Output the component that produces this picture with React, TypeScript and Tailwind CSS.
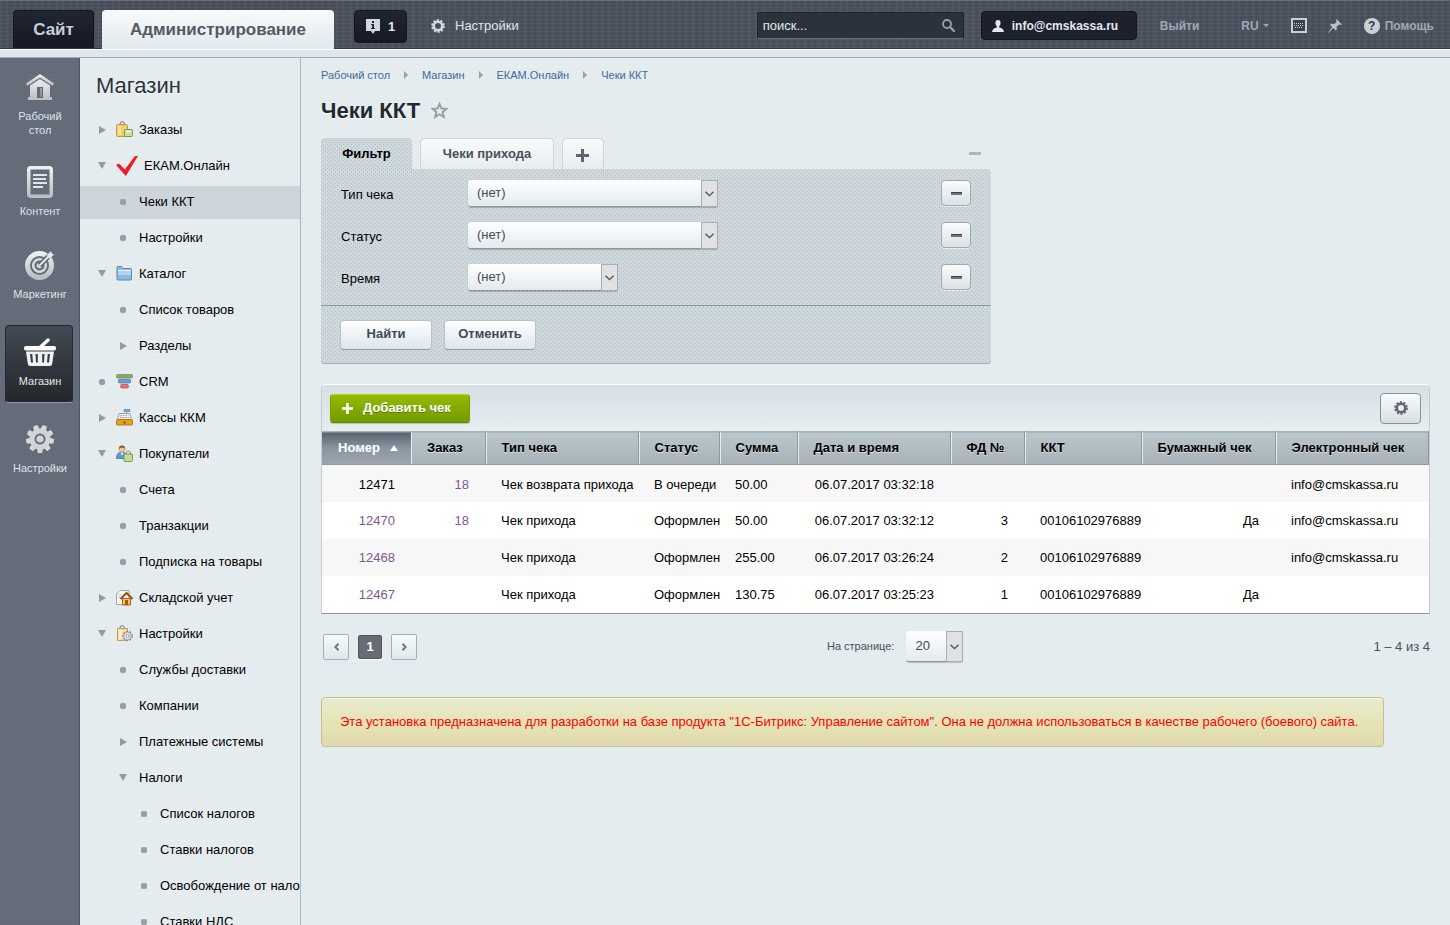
import type { ReactNode } from "react";
import clsx from "clsx";

/* ---------- icons ---------- */

const GearIcon = ({ size = 14, className }: { size?: number; className?: string }) => (
  <svg width={size} height={size} viewBox="0 0 14 14" className={className} fill="none">
    <circle cx="7" cy="7" r="4.2" stroke="currentColor" strokeWidth="2.4" />
    <circle
      cx="7"
      cy="7"
      r="5.9"
      stroke="currentColor"
      strokeWidth="1.8"
      strokeDasharray="2.2 1.5"
    />
  </svg>
);

const PlusIcon = ({ size = 13, className }: { size?: number; className?: string }) => (
  <svg width={size} height={size} viewBox="0 0 13 13" className={className}>
    <path d="M5 0h3v5h5v3H8v5H5V8H0V5h5z" fill="currentColor" />
  </svg>
);

const HomeIcon = () => (
  <svg width="28" height="28" viewBox="0 0 28 28" fill="url(#rail)">
    <path d="M14 1 0 10.5l1.500 2.200L14 4.500l12.500 8.200L28 10.5z" />
    <path d="M14 6 4 12.500V24H2v3h24v-3h-2V12.500zM11 14h6v11h-6z" fillRule="evenodd" />
    <path d="M14 15h2v9h-2z" opacity=".4" />
  </svg>
);

const ContentIcon = () => (
  <svg width="26" height="32" viewBox="0 0 26 32">
    <rect x="1.750" y="1.750" width="22.500" height="28.500" rx="2" fill="none" stroke="url(#rail)" strokeWidth="3.500" />
    <path d="M6 9h14M6 13h13M6 17h14M6 21h10" stroke="#dfe5e8" strokeWidth="2" />
  </svg>
);

const TargetIcon = () => (
  <svg width="30" height="30" viewBox="0 0 30 30" fill="none">
    <circle cx="14.500" cy="15.500" r="12" stroke="url(#rail)" strokeWidth="5" />
    <circle cx="14.500" cy="15.500" r="6.300" stroke="#d5dadd" strokeWidth="2.600" />
    <circle cx="14.500" cy="15.500" r="2.800" fill="#d5dadd" />
    <path d="M14.500 15.500 26 4" stroke="#5d6471" strokeWidth="5" />
    <path d="M14.500 15.500 25 5" stroke="#e3e7e9" strokeWidth="2.200" />
    <path d="m22 5 4-4 .8 2.600L29 4.500 25 8.500l-2.600-.8z" fill="#e3e7e9" />
  </svg>
);

const BasketIcon = () => (
  <svg width="32" height="28" viewBox="0 0 32 28">
    <path d="M16.500 9 24 2" stroke="#fff" strokeWidth="3.400" strokeLinecap="round" />
    <rect y="8" width="32" height="4.500" rx="2" fill="#fff" />
    <path
      d="M2 13.500h28l-1.800 12.300q-.3 2.200-2.400 2.200H6.200q-2.100 0-2.400-2.200zM6 16l1 8.500h2L8.300 16zm5.500 0 .5 8.500h1.800V16zm6.700 0v8.500H20l.5-8.500zm5.500 0-.7 8.500h2L26 16z"
      fill="#eef1f2"
      fillRule="evenodd"
    />
  </svg>
);

const CogIcon = () => (
  <svg width="30" height="30" viewBox="-15 -15 30 30">
    {[20, 60, 100, 140, 180, 220, 260, 300, 340].map((a) => (
      <path key={a} d="M-3-9-2.200-14h4.400L3-9z" fill="#d5dadd" transform={`rotate(${a})`} />
    ))}
    <circle r="8" fill="none" stroke="#cfd5d8" strokeWidth="5" />
    <circle r="3.600" fill="#cfd5d8" />
  </svg>
);

const StarIcon = () => (
  <svg width="17" height="17" viewBox="0 0 17 17">
    <path
      d="m8.500 1.800 1.900 4.600 5 .4-3.800 3.300 1.200 4.900-4.300-2.700L4.200 15l1.200-4.900L1.600 6.800l5-.4z"
      fill="none"
      stroke="#939da4"
      strokeWidth="1.900"
    />
  </svg>
);

const OrdersIcon = () => (
  <svg width="17" height="17" viewBox="0 0 17 17">
    <path d="M4 5V3q0-2.400 2.200-2.400T8.500 3v2" fill="none" stroke="#7d7d78" />
    <rect x=".5" y="3.500" width="11" height="12" rx="1" fill="#f3cd6c" stroke="#c49a45" />
    <path d="M2 5h3v9H2z" fill="#fae3a0" />
    <rect x="8.500" y="8.500" width="8" height="7" rx="1" fill="#cfe09a" stroke="#7c9a55" />
    <path d="M10.500 10.500h4" stroke="#fff" strokeWidth="1.500" />
  </svg>
);

const CheckIcon = () => (
  <svg width="22" height="20" viewBox="0 0 22 20">
    <path d="m0 9 3-1.600 5.800 6L19 0h3L9.800 20z" fill="#ed1c24" />
  </svg>
);

const FolderIcon = () => (
  <svg width="17" height="17" viewBox="0 0 17 17">
    <path d="M1 14V2.500q0-1 1-1h3.500l1.500 2h7.500q1 0 1 1V14q0 1-1 1H2q-1 0-1-1z" fill="#8fbbdd" stroke="#5d87b5" />
    <path d="M2 6h13v4H2z" fill="#b4d4ec" />
    <path d="M2 5.500h13" stroke="#e6f2fa" />
  </svg>
);

const CrmIcon = () => (
  <svg width="17" height="17" viewBox="0 0 17 17">
    <rect x=".5" y="1.500" width="16" height="3.500" rx="1" fill="#8aa867" stroke="#6f8d50" strokeWidth=".7" />
    <rect x="2.500" y="6.300" width="12" height="3.700" rx="1" fill="#6f9ed2" stroke="#4a73a8" strokeWidth=".7" />
    <rect x="4.700" y="11.500" width="7.600" height="3.500" rx="1" fill="#e2736b" stroke="#b74a45" strokeWidth=".7" />
  </svg>
);

const CashIcon = () => (
  <svg width="17" height="17" viewBox="0 0 17 17">
    <path d="M8 .5h6v2H8z" fill="#64a9e0" stroke="#3f81bd" strokeWidth=".6" />
    <path d="M10 2.500h1V5h-1z" fill="#999" />
    <path d="M3 4.500h11l1.500 6.500h-14z" fill="#eceff0" stroke="#9ba1a3" />
    <path d="M4.500 6.500h8M4 8.500h9" stroke="#9ba1a3" strokeDasharray="1.500 1" />
    <rect x=".5" y="10.500" width="16" height="5.500" rx="1" fill="#e3a21d" stroke="#b57c12" />
    <path d="M7.500 12.500h2v2h-2z" fill="#7d4c00" />
  </svg>
);

const BuyersIcon = () => (
  <svg width="17" height="17" viewBox="0 0 17 17">
    <path d="M.5 13q0-5 3.500-5.500h4q2 .5 2.500 2.500v3.500H.5z" fill="#5f98d6" stroke="#3d6da8" strokeWidth=".7" />
    <path d="m4.500 7.500 1.500 3 1.500-3z" fill="#fff" />
    <circle cx="6" cy="4.200" r="3" fill="#f0c594" stroke="#a8763c" strokeWidth=".5" />
    <path d="M2.800 4Q2.800.5 6 .5T9.200 4L8 2.800H4.500z" fill="#8a5427" />
    <path d="M10 9.500V8q0-2 2.300-2t2.200 2v1.500" fill="none" stroke="#7f9563" />
    <rect x="8" y="9" width="8.500" height="7.500" rx="1" fill="#c4dc92" stroke="#7c9a55" />
  </svg>
);

const StockIcon = () => (
  <svg width="17" height="17" viewBox="0 0 17 17">
    <path d="M.5 15.500V5L4 1.500h9v14z" fill="#f7f7f4" stroke="#a3a7a5" />
    <path d="M2.500 6h3M2.500 8.500h2" stroke="#b9bdbb" />
    <path d="M6.500 9.500h8V16h-8z" fill="#f2c368" stroke="#a9651c" />
    <path d="m4.500 10 6-6 6 6" fill="none" stroke="#9a4f12" strokeWidth="2" />
    <path d="M9 11h3v5H9z" fill="#a35d17" />
  </svg>
);

const ShopSettingsIcon = () => (
  <svg width="17" height="17" viewBox="0 0 17 17">
    <path d="M4 4.500V3q0-2.400 2.200-2.400T8.500 3v1.500" fill="none" stroke="#85837c" />
    <path d="M1.500 3.500h10v12h-10z" fill="#f5dba8" stroke="#c49a5d" />
    <path d="M3 5h3v9H3z" fill="#fbecca" />
    <circle cx="11.500" cy="11" r="4.500" fill="#e0e4e6" stroke="#858d91" strokeWidth="1.500" strokeDasharray="2 1.200" />
    <circle cx="11.500" cy="11" r="3.800" fill="#dfe3e5" stroke="#9aa1a4" strokeWidth=".8" />
    <circle cx="11.500" cy="11" r="1.500" fill="#fff" stroke="#8b9295" strokeWidth=".8" />
  </svg>
);

/* ---------- header ---------- */

const Header = () => {
  return (
    <header className="shrink-0">
      <div className="flex h-[49px] items-start border-t border-[#6a707b] border-b border-b-[#34383f] bg-[#49505b] bg-[repeating-linear-gradient(90deg,rgba(255,255,255,0.04)_0_1px,transparent_1px_3px,rgba(0,0,0,0.05)_3px_4px,transparent_4px_7px),repeating-linear-gradient(0deg,rgba(255,255,255,0.04)_0_1px,transparent_1px_4px)] pl-[13px] pr-4 text-[13px]">
        <a
          href="#site"
          className="mt-[9px] flex h-[38px] w-[81px] items-center justify-center rounded-t-[4px] border border-b-0 border-[#121620] bg-linear-to-b from-[#1f2532] to-[#171924] text-[17px] font-bold text-[#c6ced8]"
        >
          Сайт
        </a>
        <a
          href="#admin"
          className="ml-2 mt-[9px] flex h-[39px] w-[232px] items-center justify-center rounded-t-[4px] bg-linear-to-b from-[#f8fafa] to-[#e0e9ed] text-[17px] font-bold text-[#555a62]"
        >
          Администрирование
        </a>
        <button className="ml-5 mt-[9px] flex h-[33px] w-[53px] items-center justify-center gap-2 rounded-[4px] border border-[#121620] bg-linear-to-b from-[#1f2532] to-[#171924] font-bold text-[#e4e9ee]">
          <svg width="14" height="15" viewBox="0 0 14 15">
            <path d="M0 0h14v12H9l-2 3-2-3H0z" fill="#cfd7df" />
            <path d="M6 2h2v2H6zM5 5h3v4h1v1H5V9h1V6H5z" fill="#232936" />
          </svg>
          1
        </button>
        <a href="#settings" className="ml-6 mt-2 flex h-[33px] items-center gap-2.5 text-[#dfe5ea]">
          <GearIcon className="text-[#d5dbe0]" />
          Настройки
        </a>

        <div className="ml-auto flex h-[49px] items-center">
          <form className="flex h-[27px] w-[207px] items-center rounded-[2px] border border-[#1c212a] border-b-[#6a717c] bg-[#2c323c] pl-[5px] pr-2">
            <input
              aria-label="Поиск"
              placeholder="поиск..."
              className="min-w-0 flex-1 text-[#e3e8ec] placeholder:text-[#e3e8ec] focus:outline-none"
            />
            <button type="button" aria-label="Найти на сайте">
              <svg width="13" height="13" viewBox="0 0 13 13" fill="none" stroke="#98a0a9">
                <circle cx="5" cy="5" r="4" strokeWidth="1.800" />
                <path d="m8 8 4 4" strokeWidth="2.400" strokeLinecap="round" />
              </svg>
            </button>
          </form>
          <a
            href="#profile"
            className="ml-[17px] flex h-[29px] w-[156px] items-center gap-2 rounded-[4px] border border-[#121620] bg-[#1c212d] pl-2.5 text-[12px] font-bold text-[#e4e9ee]"
          >
            <svg width="12" height="12" viewBox="0 0 12 12" fill="#e4e9ee">
              <path d="M6 0q2.600 0 2.600 3Q8.600 5 7.200 6.300v1.200Q11.500 8.300 12 12H0q.5-3.700 4.800-4.500V6.300Q3.400 5 3.400 3 3.400 0 6 0z" />
            </svg>
            info@cmskassa.ru
          </a>
          <div className="flex items-center text-[12px] font-bold text-[#a1a8b5]">
            <a href="#logout" className="ml-[23px]">
              Выйти
            </a>
            <button className="ml-[42px] flex items-center gap-1">
              RU
              <span className="border-x-[3px] border-t-[3px] border-x-transparent border-t-[#a1a8b5]" />
            </button>
            <button aria-label="Горячие клавиши" className="ml-[22px]">
              <svg width="16" height="15" viewBox="0 0 16 15">
                <path d="M1 1h14v13H1z" fill="#3a414c" stroke="#c9d1d6" strokeWidth="2" />
                <path d="M3 5.500h10M3 7.500h10M4 9.500h8" stroke="#c9d1d6" strokeDasharray="1 1" />
              </svg>
            </button>
            <button aria-label="Закрепить" className="ml-[21px]">
              <svg width="14" height="14" viewBox="0 0 14 14" fill="#b9c0c8">
                <path d="m8.500 0 5.500 5.500-1.500.5-1.500-.5L8.500 8l.3 2.500-1 1L5.300 9 .5 13.800l-.5-.3L4.300 8 2 5.800l1-1 3 .2L8.700 3 8 1.500z" />
              </svg>
            </button>
            <a href="#help" className="ml-[22px] flex items-center gap-[5px]">
              <span className="flex size-4 items-center justify-center rounded-full bg-[#c9d1d8] text-[12px] text-[#30363f]">
                ?
              </span>
              Помощь
            </a>
          </div>
        </div>
      </div>
      <div className="h-[9px] border-t border-white border-b border-b-[#9fadb0] bg-[#dde7ed]" />
    </header>
  );
};

/* ---------- left rail ---------- */

const sections: { label: string; icon: ReactNode; className: string; active?: boolean }[] = [
  { label: "Рабочий стол", icon: <HomeIcon />, className: "pb-2" },
  { label: "Контент", icon: <ContentIcon />, className: "pb-2.5" },
  { label: "Маркетинг", icon: <TargetIcon />, className: "pb-3.5" },
  { label: "Магазин", icon: <BasketIcon />, className: "pb-3.5", active: true },
  { label: "Настройки", icon: <CogIcon />, className: "pb-3.5" },
];

const Rail = () => {
  return (
    <nav className="flex w-20 shrink-0 flex-col gap-[9px] border-r border-[#50576a] bg-[#666d7b] bg-[conic-gradient(from_270deg_at_1px_1px,#585f6c_90deg,transparent_0),conic-gradient(from_270deg_at_1px_1px,#585f6c_90deg,transparent_0)] [background-position:0_0,2px_2px] [background-size:4px_4px] pl-[5px] pr-1.5 pt-0.5">
      <svg width="0" height="0" className="absolute">
        <linearGradient id="rail" x1="0" y1="0" x2="0" y2="1">
          <stop offset="0" stopColor="#eceff0" />
          <stop offset="1" stopColor="#b9bfc4" />
        </linearGradient>
      </svg>
      {sections.map((s) => (
        <a
          key={s.label}
          href="#section"
          className={clsx(
            "flex flex-col items-center gap-1.5 rounded-[4px] border pl-2 pr-1.5 pt-2.5 text-center text-[11px] leading-[14px]",
            s.className,
            s.active
              ? "border-[#262a30] border-b-[#9198a2] bg-linear-to-b from-[#434a54] to-[#23272c] text-[#e3e7ea]"
              : "border-transparent text-[#dfe3e7]",
          )}
        >
          <span className="flex h-8 items-center">{s.icon}</span>
          {s.label}
        </a>
      ))}
    </nav>
  );
};

/* ---------- menu ---------- */

type Item = {
  label: string;
  level: 1 | 2 | 3;
  state: "open" | "closed" | "leaf";
  icon?: ReactNode;
  active?: boolean;
};

const items: Item[] = [
  { label: "Заказы", level: 1, state: "closed", icon: <OrdersIcon /> },
  { label: "ЕКАМ.Онлайн", level: 1, state: "open", icon: <CheckIcon /> },
  { label: "Чеки ККТ", level: 2, state: "leaf", active: true },
  { label: "Настройки", level: 2, state: "leaf" },
  { label: "Каталог", level: 1, state: "open", icon: <FolderIcon /> },
  { label: "Список товаров", level: 2, state: "leaf" },
  { label: "Разделы", level: 2, state: "closed" },
  { label: "CRM", level: 1, state: "leaf", icon: <CrmIcon /> },
  { label: "Кассы ККМ", level: 1, state: "closed", icon: <CashIcon /> },
  { label: "Покупатели", level: 1, state: "open", icon: <BuyersIcon /> },
  { label: "Счета", level: 2, state: "leaf" },
  { label: "Транзакции", level: 2, state: "leaf" },
  { label: "Подписка на товары", level: 2, state: "leaf" },
  { label: "Складской учет", level: 1, state: "closed", icon: <StockIcon /> },
  { label: "Настройки", level: 1, state: "open", icon: <ShopSettingsIcon /> },
  { label: "Службы доставки", level: 2, state: "leaf" },
  { label: "Компании", level: 2, state: "leaf" },
  { label: "Платежные системы", level: 2, state: "closed" },
  { label: "Налоги", level: 2, state: "open" },
  { label: "Список налогов", level: 3, state: "leaf" },
  { label: "Ставки налогов", level: 3, state: "leaf" },
  { label: "Освобождение от налогов", level: 3, state: "leaf" },
  { label: "Ставки НДС", level: 3, state: "leaf" },
];

const Marker = ({ state }: { state: Item["state"] }) => (
  <span className="flex w-2 shrink-0 items-center justify-center">
    {state === "leaf" && <span className="size-1.5 shrink-0 rounded-[2px] bg-[#93a0ab]" />}
    {state === "closed" && (
      <span className="shrink-0 border-y-4 border-l-[7px] border-y-transparent border-l-[#929ba1]" />
    )}
    {state === "open" && (
      <span className="shrink-0 border-x-4 border-t-[7px] border-x-transparent border-t-[#929ba1]" />
    )}
  </span>
);

const Menu = () => {
  return (
    <aside className="w-[221px] shrink-0 overflow-hidden border-r border-[#a3b9cf] pt-4">
      <h2 className="pl-4 text-[22px] leading-6 text-[#2d3238] [text-shadow:0_1px_#fff]">Магазин</h2>
      <ul className="mt-4 flex flex-col gap-[3px]">
        {items.map((item, i) => (
          <li key={i}>
            <a
              href="#menu"
              className={clsx(
                "flex h-[33px] items-center whitespace-nowrap pb-0.5 text-[13px] text-black",
                item.level === 1 && "pl-[18px]",
                item.level === 2 && "pl-[39px]",
                item.level === 3 && "pl-[60px]",
                item.active && "bg-[#cdd5db]",
              )}
            >
              <Marker state={item.state} />
              {item.icon && <span className="ml-2.5 shrink-0">{item.icon}</span>}
              <span className={item.icon ? "ml-1.5" : "ml-3"}>{item.label}</span>
            </a>
          </li>
        ))}
      </ul>
    </aside>
  );
};

/* ---------- filter ---------- */

const Select = ({ id, value, className }: { id: string; value: string; className: string }) => (
  <div className={clsx("relative", className)}>
    <select
      id={id}
      className="h-full w-full appearance-none rounded-[3px] border-b border-[#8d999e] bg-linear-to-b from-white to-[#e2ebee] pl-[9px] text-[13px] text-[#454b54] shadow-[0_1px_1px_rgba(0,0,0,0.2)]"
    >
      <option>{value}</option>
    </select>
    <span className="pointer-events-none absolute inset-y-0 right-0 flex w-[17px] items-center justify-center border border-[#a9aeb2] bg-[#e0e1e3]">
      <svg width="9" height="6" viewBox="0 0 9 6" fill="none" stroke="#4d5257" strokeWidth="1.300">
        <path d="m.5.7 4 4 4-4" />
      </svg>
    </span>
  </div>
);

const filters = [
  { id: "type", label: "Тип чека", className: "h-[27px] w-[250px]" },
  { id: "status", label: "Статус", className: "h-[27px] w-[250px]" },
  { id: "time", label: "Время", className: "h-[27px] w-[150px]" },
];

const dots =
  "bg-[#cfd8dc] bg-[conic-gradient(from_270deg_at_1px_1px,#afbdc1_90deg,transparent_0),conic-gradient(from_270deg_at_1px_1px,#afbdc1_90deg,transparent_0)] [background-position:0_0,2px_2px] [background-size:4px_4px]";

const Filter = () => {
  return (
    <section className="mt-[14px] w-full max-w-[670px]">
      <div className="flex h-[31px] items-end text-[13px] font-bold">
        <button className={clsx("h-full w-[91px] rounded-t-[4px] text-black", dots)}>Фильтр</button>
        <button className="ml-2 h-full w-[134px] rounded-t-[5px] border border-b-0 border-[#cbd5da] bg-linear-to-b from-[#f9fafa] to-[#e6edef] text-[#4a505c]">
          Чеки прихода
        </button>
        <button
          aria-label="Добавить фильтр"
          className="ml-2 flex h-full w-[42px] items-center justify-center rounded-t-[5px] border border-b-0 border-[#cbd5da] bg-linear-to-b from-[#f9fafa] to-[#e6edef] pr-0.5 pt-0.5 text-[#5f6671]"
        >
          <PlusIcon />
        </button>
        <button aria-label="Свернуть" className="ml-auto mr-2.5 flex h-full items-center">
          <span className="h-[3px] w-3 bg-[#adb6bd]" />
        </button>
      </div>
      <form className={clsx("rounded-b-[4px] rounded-tr-[4px] border-b border-[#9eabaf]", dots)}>
        <div className="flex flex-col gap-[15px] border-b border-[#8395a0] px-5 pb-[14px] pt-[11px]">
          {filters.map((f) => (
            <div key={f.id} className="flex h-[27px] items-start">
              <label htmlFor={f.id} className="w-[127px] text-[13px] leading-[29px] text-black">
                {f.label}
              </label>
              <Select id={f.id} value="(нет)" className={f.className} />
              <button
                type="button"
                aria-label="Убрать условие"
                className="ml-auto flex h-[26px] w-[30px] items-center justify-center rounded-[4px] border border-[#9eabaf] bg-linear-to-b from-[#f9fbfb] to-[#dae2e5] shadow-[0_1px_#e6edef]"
              >
                <span className="h-[3px] w-[11px] border-t border-[#3e444e] bg-[#6c7380]" />
              </button>
            </div>
          ))}
        </div>
        <div className="flex gap-3 px-[19px] pb-[13px] pt-[14px]">
          {["Найти", "Отменить"].map((t) => (
            <button
              key={t}
              type="button"
              className="h-[30px] w-[92px] rounded-[4px] border border-[#b9c3c7] border-b-[#8f9ba0] bg-linear-to-b from-white to-[#dbe6ec] pb-0.5 text-[13px] font-bold text-[#434a57]"
            >
              {t}
            </button>
          ))}
        </div>
      </form>
    </section>
  );
};

/* ---------- table ---------- */

const columns = [
  { title: "Заказ", width: "w-[74px]" },
  { title: "Тип чека", width: "w-[153px]" },
  { title: "Статус", width: "w-[81px]" },
  { title: "Сумма", width: "w-[78px]" },
  { title: "Дата и время", width: "w-[153px]" },
  { title: "ФД №", width: "w-[74px]" },
  { title: "ККТ", width: "w-[117px]" },
  { title: "Бумажный чек", width: "w-[134px]" },
  { title: "Электронный чек", width: "" },
];

const rows = [
  ["12471", "18", "Чек возврата прихода", "В очереди", "50.00", "06.07.2017 03:32:18", "", "", "", "info@cmskassa.ru"],
  ["12470", "18", "Чек прихода", "Оформлен", "50.00", "06.07.2017 03:32:12", "3", "00106102976889", "Да", "info@cmskassa.ru"],
  ["12468", "", "Чек прихода", "Оформлен", "255.00", "06.07.2017 03:26:24", "2", "00106102976889", "", "info@cmskassa.ru"],
  ["12467", "", "Чек прихода", "Оформлен", "130.75", "06.07.2017 03:25:23", "1", "00106102976889", "Да", ""],
];

const rightAligned = [0, 1, 5, 6, 8];

const Receipts = () => {
  return (
    <section className="mt-5 rounded-t-[5px] border border-[#c3ccd2] border-b-[#8f989e] border-t-white">
      <div className="flex h-[46px] items-center justify-between rounded-t-[5px] bg-linear-to-b from-[#d6dfe5] to-[#e6eef0] px-2">
        <button className="flex h-[29px] w-[140px] items-center gap-2.5 rounded-[3px] border border-t-[#b8d20c] border-x-[#7c9f00] border-b-[#678700] bg-linear-to-b from-[#97ba00] to-[#6f9b00] pl-[11px] text-[13px] font-bold text-white shadow-[0_1px_1px_rgba(0,0,0,0.2)] [text-shadow:0_1px_#5b7d00]">
          <PlusIcon size={11} />
          Добавить чек
        </button>
        <button
          aria-label="Настроить таблицу"
          className="flex h-[31px] w-[41px] items-center justify-center rounded-[4px] border border-[#84919b] bg-linear-to-b from-[#f9fbfb] to-[#d7e0e4] text-[#5f6671]"
        >
          <GearIcon />
        </button>
      </div>
      <table className="w-full table-fixed whitespace-nowrap text-[13px] text-black">
        <thead>
          <tr className="h-[33px] border-y border-t-[#a6b4ba] border-b-[#8e9aa2] bg-linear-to-b from-[#b9c6cb] to-[#a8b3b9] text-left">
            <th className="w-[89px] bg-linear-to-b from-[#5a646f] via-[#8b96a2] to-[#9ba6af] pl-4 text-white [text-shadow:0_1px_1px_#4d5660]">
              <button className="flex items-center gap-2.5 font-bold">
                Номер
                <span className="border-x-4 border-b-[6px] border-x-transparent border-b-white" />
              </button>
            </th>
            {columns.map((c) => (
              <th
                key={c.title}
                className={clsx(
                  "border-r border-r-[#8e9aa2] pl-4 font-bold shadow-[inset_1px_0_rgba(255,255,255,0.7)] [text-shadow:0_1px_#d5dee2]",
                  c.width,
                )}
              >
                {c.title}
              </th>
            ))}
          </tr>
        </thead>
        <tbody>
          {rows.map((row, r) => (
            <tr key={row[0]} className="h-[37px] odd:bg-[#f7f7f7] even:bg-white">
              {row.map((cell, c) => (
                <td
                  key={c}
                  className={clsx("pt-0.5", rightAligned.includes(c) ? "pr-4 text-right" : "pl-4")}
                >
                  {cell && ((c === 0 && r > 0) || c === 1) ? (
                    <a href="#receipt" className="text-[#7f5791]">
                      {cell}
                    </a>
                  ) : (
                    cell
                  )}
                </td>
              ))}
            </tr>
          ))}
        </tbody>
      </table>
    </section>
  );
};

const Pagination = () => {
  const arrow =
    "flex size-[26px] items-center justify-center rounded-[2px] border border-[#a3b0b9] bg-linear-to-b from-[#f8fafa] to-[#dde8ee]";
  return (
    <div className="mt-[17px] flex h-8 items-center justify-between pl-0.5 text-[13px] text-[#4a515b]">
      <div className="flex items-center gap-[9px]">
        <button aria-label="Назад" className={arrow}>
          <svg width="5" height="8" viewBox="0 0 5 8" fill="none" stroke="#6d7782" strokeWidth="2">
            <path d="M4.500.8 1.300 4l3.200 3.200" />
          </svg>
        </button>
        <span className="flex size-6 items-center justify-center rounded-[2px] border border-[#4f5660] bg-[#656c76] font-bold text-white shadow-[0_1px_#fff]">
          1
        </span>
        <button aria-label="Вперёд" className={arrow}>
          <svg width="5" height="8" viewBox="0 0 5 8" fill="none" stroke="#6d7782" strokeWidth="2">
            <path d="M.5.8 3.700 4 .5 7.200" />
          </svg>
        </button>
      </div>
      <div className="flex items-center gap-3">
        <label htmlFor="size" className="text-[11px]">
          На странице:
        </label>
        <Select id="size" value="20" className="h-[31px] w-[57px]" />
      </div>
      <span>1 – 4 из 4</span>
    </div>
  );
};

const crumbs = ["Рабочий стол", "Магазин", "ЕКАМ.Онлайн", "Чеки ККТ"];

const App = () => {
  return (
    <div className="flex h-screen flex-col overflow-hidden bg-[#e4ecef] bg-[repeating-linear-gradient(0deg,#e4edef_0_2px,#e6eaec_3px_4px,#e3edf0_5px_6px)] font-['Liberation_Sans',Arial,sans-serif]">
      <Header />
      <div className="flex min-h-0 flex-1">
        <Rail />
        <Menu />
        <main className="min-w-0 flex-1 px-5 pt-[9px]">
          <nav className="flex h-4 items-center text-[11px] text-[#3d6a9b]">
            {crumbs.map((c, i) => (
              <span key={c} className="flex items-center">
                {i > 0 && (
                  <span className="mx-[14px] border-y-4 border-l-4 border-y-transparent border-l-[#98a2a9]" />
                )}
                <a href="#crumb">{c}</a>
              </span>
            ))}
          </nav>
          <div className="mt-[13px] flex h-7 items-center gap-[11px]">
            <h1 className="text-[22px] font-bold text-[#23292e] [text-shadow:0_1px_#fff]">Чеки ККТ</h1>
            <button aria-label="В избранное">
              <StarIcon />
            </button>
          </div>
          <Filter />
          <Receipts />
          <Pagination />
          <p className="mr-[46px] mt-[34px] flex min-h-[50px] items-center rounded-[4px] border border-[#c9bd8c] bg-linear-to-b from-[#e9ebcf] via-[#e6e4b6] to-[#dfdaad] px-[18px] text-[13px] text-[#ff0000] shadow-[inset_0_1px_#f7f6e6]">
            Эта установка предназначена для разработки на базе продукта "1С-Битрикс: Управление сайтом". Она не
            должна использоваться в качестве рабочего (боевого) сайта.
          </p>
        </main>
      </div>
    </div>
  );
};

export default App;
